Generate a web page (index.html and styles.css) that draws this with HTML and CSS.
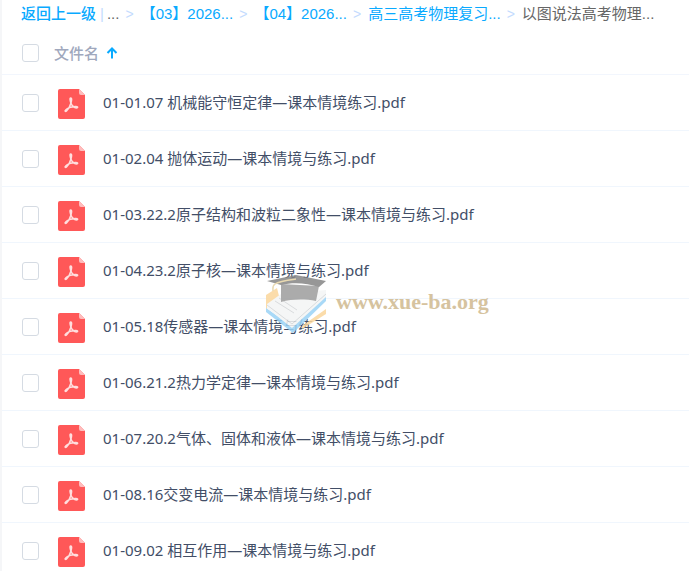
FILE: index.html
```html
<!DOCTYPE html>
<html lang="zh-CN">
<head>
    <meta charset="UTF-8" />
    <meta name="viewport" content="width=device-width, initial-scale=1.0" />
    <title>以图说法高考物理</title>
    <link rel="stylesheet" href="styles.css">
</head>
<body>
    <!-- Shared icons -->
    <svg class="sprite" aria-hidden="true">
        <symbol id="icon-pdf" viewBox="0 0 27 30">
            <path fill="#ff5858" d="M2 0h19l6 6v22a2 2 0 0 1-2 2H2a2 2 0 0 1-2-2V2a2 2 0 0 1 2-2z" />
            <path fill="#ffbcbc" d="M21 0l6 6h-4a2 2 0 0 1-2-2z" />
            <path fill="none" stroke="#ffdede" stroke-width="1.600" stroke-linecap="round" stroke-linejoin="round" d="M12.700 9c1.400 0 .8 3 .2 5.200-.8 3-2.400 6-4.400 7.800-1 .9-1.800.1-1-.8 1.500-1.800 5.800-3.400 9.800-3.700 2.700-.2 3 1.400 1.100 1.400-2.200 0-4.700-2.500-5.500-5-.7-2.100-1.300-4.900-.2-4.900z" />
        </symbol>
    </svg>

    <div id="app">
        <nav class="breadcrumb">
            <a class="back" href="#">返回上一级</a>
            <span class="divider">|</span>
            <span class="more">...</span>
            <span class="arrow">&gt;</span>
            <a href="#">【03】2026...</a>
            <span class="arrow">&gt;</span>
            <a href="#">【04】2026...</a>
            <span class="arrow">&gt;</span>
            <a href="#">高三高考物理复习...</a>
            <span class="arrow">&gt;</span>
            <span class="current">以图说法高考物理...</span>
        </nav>

        <div class="list-header">
            <input type="checkbox" id="check-all" aria-label="全选" />
            <button class="sort" type="button">
                文件名
                <svg class="sort-icon" viewBox="0 0 12 12" aria-hidden="true">
                    <path d="M6 11.500V2M1.500 6L6 1.500 10.500 6" />
                </svg>
            </button>
        </div>

        <ul class="file-list">
            <li class="file">
                <input type="checkbox" id="file-1" />
                <svg class="file-icon" aria-hidden="true"><use href="#icon-pdf" /></svg>
                <label for="file-1">01-01.07 机械能守恒定律—课本情境练习.pdf</label>
            </li>
            <li class="file">
                <input type="checkbox" id="file-2" />
                <svg class="file-icon" aria-hidden="true"><use href="#icon-pdf" /></svg>
                <label for="file-2">01-02.04 抛体运动—课本情境与练习.pdf</label>
            </li>
            <li class="file">
                <input type="checkbox" id="file-3" />
                <svg class="file-icon" aria-hidden="true"><use href="#icon-pdf" /></svg>
                <label for="file-3">01-03.22.2原子结构和波粒二象性—课本情境与练习.pdf</label>
            </li>
            <li class="file">
                <input type="checkbox" id="file-4" />
                <svg class="file-icon" aria-hidden="true"><use href="#icon-pdf" /></svg>
                <label for="file-4">01-04.23.2原子核—课本情境与练习.pdf</label>
            </li>
            <li class="file">
                <input type="checkbox" id="file-5" />
                <svg class="file-icon" aria-hidden="true"><use href="#icon-pdf" /></svg>
                <label for="file-5">01-05.18传感器—课本情境与练习.pdf</label>
            </li>
            <li class="file">
                <input type="checkbox" id="file-6" />
                <svg class="file-icon" aria-hidden="true"><use href="#icon-pdf" /></svg>
                <label for="file-6">01-06.21.2热力学定律—课本情境与练习.pdf</label>
            </li>
            <li class="file">
                <input type="checkbox" id="file-7" />
                <svg class="file-icon" aria-hidden="true"><use href="#icon-pdf" /></svg>
                <label for="file-7">01-07.20.2气体、固体和液体—课本情境与练习.pdf</label>
            </li>
            <li class="file">
                <input type="checkbox" id="file-8" />
                <svg class="file-icon" aria-hidden="true"><use href="#icon-pdf" /></svg>
                <label for="file-8">01-08.16交变电流—课本情境与练习.pdf</label>
            </li>
            <li class="file">
                <input type="checkbox" id="file-9" />
                <svg class="file-icon" aria-hidden="true"><use href="#icon-pdf" /></svg>
                <label for="file-9">01-09.02 相互作用—课本情境与练习.pdf</label>
            </li>
        </ul>

        <!-- Watermark over the list -->
        <div class="watermark">
            <svg class="watermark-logo" viewBox="0 0 62 58" aria-hidden="true">
                <path fill="#fbd79c" d="M0 20l11-7 3 12-14 9zM36 51l24-17v5L36 54z" />
                <path fill="#9bd3f6" d="M0 33l26 18 34-30v5L27 58 0 37z" />
                <path fill="#f4f5f5" d="M1 29l14-10 45-4v7L26 53 1 33z" />
                <path fill="none" stroke="#d3d6d8" d="M1 30l25 19 34-30M9 26l19 12M13 23l18 12" />
                <path fill="#9d9d9d" d="M15 9l38 2-3 15c-11-2-24-2-35 1z" />
                <path fill="#858585" d="M1 6L30 0l30 6-7 6c-12-4-26-5-38-2z" />
                <path fill="none" stroke="#e5d3a4" stroke-width="1.500" d="M30 4c-8 1-17 2-21 5-3 2-2 4-2 7" />
            </svg>
            <span class="watermark-text">www.xue-ba.org</span>
        </div>
    </div>
</body>
</html>
```
FILE: styles.css
```css
* {
    box-sizing: border-box;
}

body {
    margin: 0;
    background: #fff;
    color: #424e67;
    font-family: "Noto Sans", "Noto Sans CJK SC", sans-serif;
    font-size: 15px;
    line-height: 20px;
}

#app {
    position: relative;
    min-height: 100vh;
    border-left: 2px solid #f5f6f8;
    overflow: hidden;
}

.sprite {
    display: none;
}

a {
    color: #09aaff;
    text-decoration: none;
}

/* Breadcrumb */
.breadcrumb {
    display: flex;
    align-items: center;
    height: 32px;
    padding: 0 19px 4px;
    font-family: "Liberation Sans", "Noto Sans CJK SC", sans-serif;
    white-space: nowrap;
}

.back {
    font-weight: 500;
}

.divider {
    margin: 0 3px 0 4px;
    color: #c4dbfe;
}

.arrow {
    margin: 0 7px 0 6px;
    color: #c4dbfe;
    font-size: 14px;
}

.more,
.current {
    color: #666;
}

/* Checkboxes */
input[type=checkbox] {
    appearance: none;
    flex: none;
    width: 17px;
    height: 18px;
    margin: 0;
    border: 1px solid #d5dbe3;
    border-radius: 3px;
    background: #fff;
}

input[type=checkbox]:checked {
    background: #09aaff;
}

/* List header */
.list-header {
    display: flex;
    align-items: center;
    gap: 15px;
    height: 43px;
    padding-left: 20px;
    border-bottom: 1px solid #f2f6fd;
}

.sort {
    display: flex;
    align-items: center;
    gap: 7px;
    padding: 0;
    border: 0;
    background: none;
    color: #a0a8bd;
    font: inherit;
    font-weight: 500;
}

.sort-icon {
    width: 12px;
    height: 12px;
    fill: none;
    stroke: #09aaff;
    stroke-width: 2;
}

/* Files */
.file-list {
    margin: 0;
    padding: 0;
    list-style: none;
}

.file {
    display: flex;
    align-items: center;
    height: 56px;
    padding: 0 20px;
    border-bottom: 1px solid #f0f6fd;
}

.file label {
    padding-bottom: 2px;
}

.file-icon {
    flex: none;
    width: 27px;
    height: 30px;
    margin: 2px 18px 0 19px;
}

/* Watermark */
.watermark {
    position: absolute;
    top: 275px;
    left: 264px;
    display: flex;
    align-items: center;
    gap: 8px;
    opacity: 0.85;
    pointer-events: none;
}

.watermark-logo {
    width: 62px;
    height: 58px;
}

.watermark-text {
    padding-bottom: 4px;
    color: #cfb98f;
    font-family: "Liberation Serif", serif;
    font-size: 22px;
    font-weight: bold;
}
```
